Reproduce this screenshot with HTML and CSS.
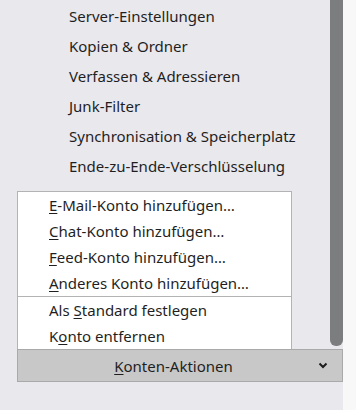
FILE: index.html
```html
<!DOCTYPE html>
<html lang="de">
<head>
  <meta charset="UTF-8">
  <title>Kontoeinstellungen</title>
  <link rel="stylesheet" href="styles.css">
</head>
<body>
  <div class="window">
    <div class="pane">
      <div class="thumb"></div>
      <ul class="tree">
        <li>Server-Einstellungen</li>
        <li>Kopien &amp; Ordner</li>
        <li>Verfassen &amp; Adressieren</li>
        <li>Junk-Filter</li>
        <li>Synchronisation &amp; Speicherplatz</li>
        <li>Ende-zu-Ende-Verschlüsselung</li>
      </ul>
      <div class="actions">
        <ul class="menu">
          <li><u>E</u>-Mail-Konto hinzufügen…</li>
          <li><u>C</u>hat-Konto hinzufügen…</li>
          <li><u>F</u>eed-Konto hinzufügen…</li>
          <li><u>A</u>nderes Konto hinzufügen…</li>
          <li class="sep"></li>
          <li>Als <u>S</u>tandard festlegen</li>
          <li>K<u>o</u>nto entfernen</li>
        </ul>
        <button class="menu-button">
          <span class="label"><u>K</u>onten-Aktionen</span>
          <svg class="chevron" width="10" height="7" viewBox="0 0 10 7">
            <path d="M1.5 1.5 L5 5 L8.5 1.5" fill="none" stroke="#1c1c1c" stroke-width="2"/>
          </svg>
        </button>
      </div>
    </div>
    <div class="strip"></div>
  </div>
</body>
</html>
```

FILE: styles.css
```css
* {
  margin: 0;
  padding: 0;
  box-sizing: border-box;
}
body {
  background: #e9e8ed;
  font-family: 'Noto Sans', 'Open Sans', sans-serif;
  font-size: 15px;
  color: #1f1f1f;
  width: 356px;
  height: 410px;
  overflow: hidden;
}
.window {
  display: flex;
  height: 410px;
}
.pane {
  position: relative;
  width: 343px;
  padding-left: 17px;
}
.strip {
  flex: 1;
  background: #f8f8f8;
}
.thumb {
  position: absolute;
  top: 0;
  right: 0;
  width: 13px;
  height: 346px;
  background: #7b7d7e;
  border-radius: 0 0 6px 6px;
}
.tree {
  list-style: none;
  padding-top: 1px;
  padding-left: 52px;
}
.tree li {
  line-height: 30px;
  height: 30px;
}
.actions {
  position: relative;
  margin-top: 168px;
}
.menu {
  position: absolute;
  left: 0;
  bottom: 100%;
  width: 275px;
  list-style: none;
  background: #fff;
  border: 1px solid #b3b3b3;
  border-bottom: none;
}
.menu li {
  height: 26px;
  line-height: 26px;
  padding-left: 31px;
}
.menu li.sep {
  height: 1px;
  padding: 0;
  background: #b3b3b3;
}
u {
  text-decoration-thickness: 1px;
  text-underline-offset: 2px;
}
.menu-button {
  display: flex;
  align-items: center;
  width: 326px;
  height: 33px;
  background: #c8c8c8;
  border: 1px solid #a9a9a9;
  font: inherit;
  color: inherit;
}
.menu-button .label {
  flex: 1;
  text-align: center;
  padding-left: 11px;
}
.chevron {
  margin-right: 14px;
}
```
